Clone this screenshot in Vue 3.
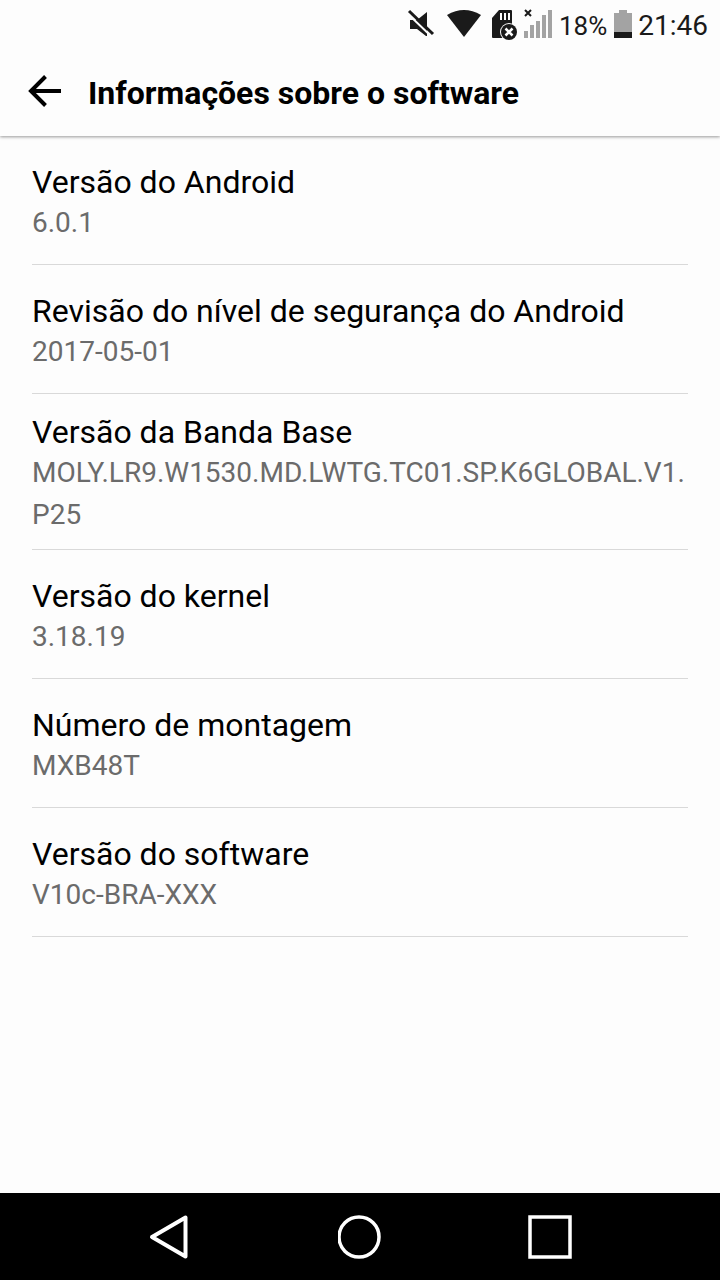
<script setup>
const items = [
  { title: 'Versão do Android', value: '6.0.1' },
  { title: 'Revisão do nível de segurança do Android', value: '2017-05-01' },
  { title: 'Versão da Banda Base', value: 'MOLY.LR9.W1530.MD.LWTG.TC01.SP.K6GLOBAL.V1.P25' },
  { title: 'Versão do kernel', value: '3.18.19' },
  { title: 'Número de montagem', value: 'MXB48T' },
  { title: 'Versão do software', value: 'V10c-BRA-XXX' },
]
</script>

<template>
  <div class="screen">
    <div class="status">
      <svg class="status-icons" width="146" height="32" viewBox="0 0 146 32" aria-hidden="true">
        <!-- muted speaker -->
        <path d="M3 12h7l10-8v24h-1l-9-7H3z" fill="#1a1a1a" />
        <path d="M1 6l25 24" stroke="#fdfdfd" stroke-width="2" />
        <path d="M2 3l24 23" stroke="#1a1a1a" stroke-width="3" />
        <!-- wifi -->
        <path d="M40 7Q57-3 74 7L57 29z" fill="#1a1a1a" />
        <!-- memory card with error badge -->
        <path d="M92 2h12q1 0 1 1v26q0 1-1 1H86q-1 0-1-1V10z" fill="#1a1a1a" />
        <path d="M94 5v7M98 5v7M102 5v7" stroke="#fff" stroke-width="2" />
        <circle cx="102" cy="24" r="9" fill="#fdfdfd" />
        <circle cx="102" cy="24" r="8" fill="#1a1a1a" />
        <path d="M98.500 20.500l7 7M105.500 20.500l-7 7" stroke="#fff" stroke-width="2.500" />
        <!-- signal -->
        <path d="M118 2l6 6M124 2l-6 6" stroke="#1a1a1a" stroke-width="2" />
        <path d="M117 23h4v7h-4zM123 17h4v13h-4zM129 13h4v17h-4zM135 7h4v23h-4zM141 2h4v28h-4z" fill="#a3a3a3" />
      </svg>
      <span class="percent">18%</span>
      <svg class="battery" width="18" height="28" viewBox="0 0 18 28" aria-hidden="true">
        <path d="M5 0h8v3h5v19H0V3h5z" fill="#a3a3a3" />
        <path d="M0 22h18v6H0z" fill="#1a1a1a" />
      </svg>
      <span class="clock">21:46</span>
    </div>

    <header class="bar">
      <button class="back" type="button" aria-label="Voltar">
        <svg width="34" height="32" viewBox="0 0 34 32" aria-hidden="true">
          <path d="M33 16H3M17.500 1.500L3 16l14.500 14.500" fill="none" stroke="#000" stroke-width="4" />
        </svg>
      </button>
      <h1>Informações sobre o software</h1>
    </header>

    <main>
      <dl>
        <div v-for="item in items" :key="item.title" class="row">
          <dt>{{ item.title }}</dt>
          <dd>{{ item.value }}</dd>
        </div>
      </dl>
    </main>

    <nav class="nav">
      <button type="button" aria-label="Voltar">
        <svg width="44" height="46" viewBox="0 0 44 46" aria-hidden="true">
          <path d="M4 23L37.500 3.500v39z" fill="none" stroke="#fff" stroke-width="4" stroke-linejoin="round" />
        </svg>
      </button>
      <button type="button" aria-label="Início">
        <svg width="44" height="46" viewBox="0 0 44 46" aria-hidden="true">
          <circle cx="21" cy="23" r="20" fill="none" stroke="#fff" stroke-width="3.500" />
        </svg>
      </button>
      <button type="button" aria-label="Aplicativos recentes">
        <svg width="44" height="46" viewBox="0 0 44 46" aria-hidden="true">
          <path d="M2 3h40v40H2z" fill="none" stroke="#fff" stroke-width="3.500" />
        </svg>
      </button>
    </nav>
  </div>
</template>

<style>
body {
  margin: 0;
  background: #fdfdfd;
}
</style>

<style scoped>
.screen {
  min-height: 100vh;
  display: flex;
  flex-direction: column;
  background: #fdfdfd;
  color: #000;
  font-family: Roboto, "Liberation Sans", sans-serif;
}
.status {
  height: 48px;
  padding: 2px 12px 0 0;
  display: flex;
  align-items: center;
  justify-content: flex-end;
  color: #1a1a1a;
}
.status-icons {
  margin: 0 6px 4px 0;
}
.percent {
  font-size: 26px;
  line-height: 32px;
}
.battery {
  margin: 0 6px 4px 7px;
}
.clock {
  font-size: 28px;
  line-height: 32px;
}
.bar {
  height: 86px;
  display: flex;
  align-items: center;
  padding-left: 28px;
  box-shadow: 0 1px 3px rgba(0, 0, 0, 0.4);
  clip-path: inset(0 0 -6px 0);
}
button {
  border: 0;
  padding: 0;
  background: none;
  cursor: pointer;
  display: flex;
  align-items: center;
  justify-content: center;
}
.back {
  margin: 0 26px 4px 0;
}
h1 {
  margin: 0;
  font-size: 32px;
  line-height: 38px;
  font-weight: 700;
}
main {
  flex: 1;
}
dl {
  margin: 0;
  padding: 0 32px;
}
.row {
  box-sizing: border-box;
  min-height: 129px;
  padding: 18px 0 13px;
  display: flex;
  flex-direction: column;
  justify-content: center;
  border-bottom: 1px solid #d9d9d9;
}
dt {
  font-size: 32px;
  line-height: 40px;
}
dd {
  margin: 0;
  font-size: 28px;
  line-height: 42px;
  color: #6b6b6b;
  overflow-wrap: anywhere;
}
.nav {
  height: 87px;
  display: flex;
  justify-content: center;
  background: #000;
}
.nav button {
  width: 190px;
}
</style>
